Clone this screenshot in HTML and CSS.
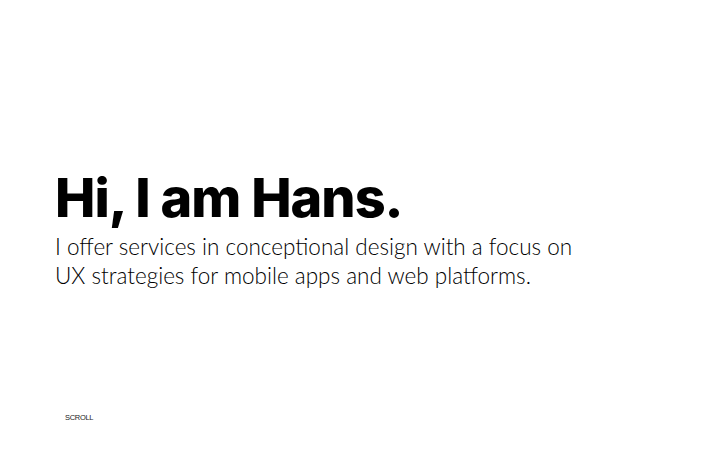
FILE: index.html
```html
<!DOCTYPE html>
<html>
<head>
<meta charset="utf-8">
<link rel="stylesheet" href="styles.css">
</head>
<body>
<main class="hero">
  <div class="intro">
    <h1 class="title">Hi, I am Hans.</h1>
    <p class="lead">I offer services in conceptional design with a focus on<br>UX strategies for mobile apps and web platforms.</p>
  </div>
  <div class="scroll">SCROLL</div>
</main>
</body>
</html>
```
FILE: styles.css
```css
html, body {
  margin: 0;
  padding: 0;
  background: #ffffff;
}
.hero {
  width: 720px;
  height: 450px;
  display: flex;
  flex-direction: column;
  box-sizing: border-box;
  padding: 169px 0 0 55px;
}
.intro {
  flex: 1;
}
.title {
  margin: 0;
  font-family: Inter, "Liberation Sans", sans-serif;
  font-weight: 800;
  font-size: 54px;
  line-height: 58px;
  letter-spacing: -1px;
  color: #000;
}
.lead {
  margin: 5px 0 0 0;
  font-family: Lato, "Noto Sans", sans-serif;
  font-weight: 300;
  font-size: 22.5px;
  line-height: 29px;
  color: #000;
}
.scroll {
  font-family: "Liberation Sans", sans-serif;
  font-size: 7.5px;
  line-height: 8px;
  letter-spacing: -0.3px;
  color: #222;
  margin: 0 0 28px 10px;
}
```
